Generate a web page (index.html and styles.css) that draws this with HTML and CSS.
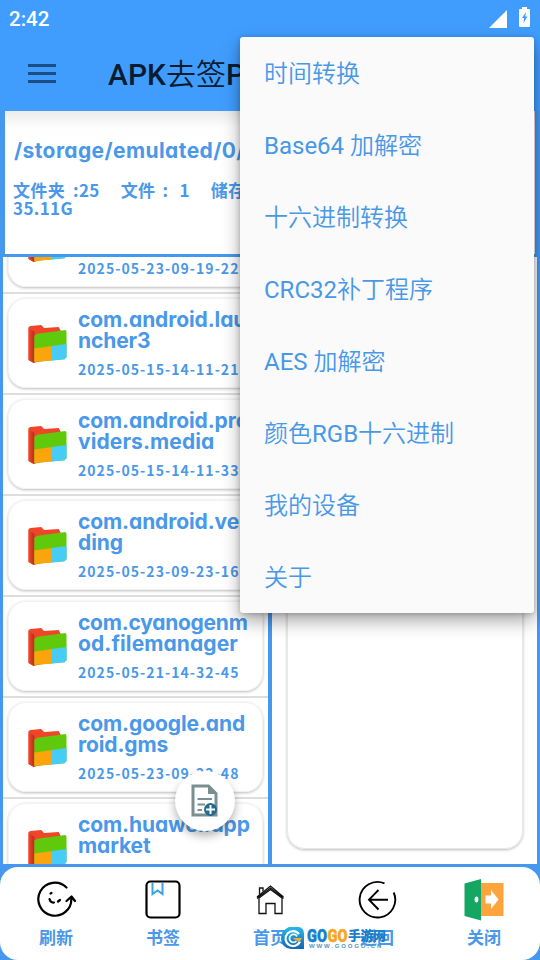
FILE: index.html
```html
<!DOCTYPE html>
<html lang="zh-CN">
<head>
<meta charset="utf-8">
<title>APK去签</title>
<link rel="stylesheet" href="styles.css">
</head>
<body>
<svg class="defs" width="0" height="0">
  <defs>
    <linearGradient id="red"><stop offset="0" stop-color="#ef4a2b"/><stop offset="1" stop-color="#b92c1b"/></linearGradient>
    <linearGradient id="logo" x2="0" y2="1"><stop offset="0" stop-color="#27b8e8"/><stop offset="1" stop-color="#1266b4"/></linearGradient>
    <symbol id="folder" viewBox="0 0 40 40">
      <path d="M0 2 2 1 13 0 16 3 31 2 33 6V32L5 39 0 36Z" fill="#ef4629"/>
      <path d="M0 3 6 7V39L0 36Z" fill="url(#red)"/>
      <path d="M6 11 9 9 38 5 39 7V32L37 35 6 38Z" fill="#60c90c"/>
      <path d="M6 24 24 21.500V36.500L6 38Z" fill="#fca40b"/>
      <path d="M24 21.500 39 19.500V33L37 35 24 36.500Z" fill="#47ccf7"/>
    </symbol>
  </defs>
</svg>
<div class="screen">
  <header class="top">
    <div class="status">
      <span class="clock">2:42</span>
      <svg class="signal" width="18" height="18" viewBox="0 0 18 18"><path d="M18 0V18H0Z" fill="#fff"/></svg>
      <svg class="battery" width="11" height="20" viewBox="0 0 11 20"><path d="M3 0H8V2H10Q11 2 11 3V19Q11 20 10 20H1Q0 20 0 19V3Q0 2 1 2H3Z" fill="#fff"/><path d="M7 5 3 11H5.200L4.500 16 8.500 9.500H6.200Z" fill="#409cfc"/></svg>
    </div>
    <div class="bar">
      <svg width="28" height="20" viewBox="0 0 28 20"><path d="M0 1.500H28M0 9.500H28M0 17.500H28" stroke="#1b4e87" stroke-width="3"/></svg>
      <h1>APK<span>去签</span>P</h1>
    </div>
  </header>
  <section class="info">
    <div class="path">/storage/emulated/0/</div>
    <div class="stats">文件夹<span class="n">:25</span><span class="g1"></span>文件<span class="colon">:</span>1<span class="g2"></span>储存<br>35.11G</div>
  </section>
  <main class="panes">
    <div class="pane left">
      <div class="row"><div class="card"><svg class="ico"><use href="#folder"/></svg><div class="txt"><b>&nbsp;<br>&nbsp;</b><time>2025-05-23-09-19-22</time></div></div></div>
      <div class="row"><div class="card"><svg class="ico"><use href="#folder"/></svg><div class="txt"><b>com.android.lau<br>ncher3</b><time>2025-05-15-14-11-21</time></div></div></div>
      <div class="row"><div class="card"><svg class="ico"><use href="#folder"/></svg><div class="txt"><b>com.android.pro<br><span class="wide">viders.media</span></b><time>2025-05-15-14-11-33</time></div></div></div>
      <div class="row"><div class="card"><svg class="ico"><use href="#folder"/></svg><div class="txt"><b>com.android.ve<br>ding</b><time>2025-05-23-09-23-16</time></div></div></div>
      <div class="row"><div class="card"><svg class="ico"><use href="#folder"/></svg><div class="txt"><b><span class="tight">com.cyanogenm</span><br><span class="wide">od.filemanager</span></b><time>2025-05-21-14-32-45</time></div></div></div>
      <div class="row"><div class="card"><svg class="ico"><use href="#folder"/></svg><div class="txt"><b>com.google.and<br>roid.gms</b><time>2025-05-23-09-22-48</time></div></div></div>
      <div class="row"><div class="card"><svg class="ico"><use href="#folder"/></svg><div class="txt"><b>com.huawei.app<br>market</b></div></div></div>
    </div>
    <div class="pane right"><div class="sheet"></div></div>
  </main>
  <nav class="tabs">
    <a><svg width="40" height="40" viewBox="0 0 40 40" fill="none" stroke="#000" stroke-width="2.200" stroke-linecap="round" stroke-linejoin="round"><path d="M30.500 7.500A16.500 16.500 0 1 0 35.300 18M30.500 21 35.500 16.500 39 21"/><path d="M14.500 13.500 15.500 13M13.500 19Q14.500 23 18 22.500M22 21.500 24 20"/></svg><span>刷新</span></a>
    <a><svg width="40" height="40" viewBox="0 0 40 40" fill="none"><rect x="3.500" y="1.500" width="33" height="36" rx="4" stroke="#000" stroke-width="2.200"/><path d="M9.500 3V14L14.500 10.500 19.500 14V3" stroke="#3aa3dc" stroke-width="2"/></svg><span>书签</span></a>
    <a><svg width="40" height="40" viewBox="0 0 40 40" fill="none" stroke="#111" stroke-width="1.300"><path d="M7 17 20.500 6 33.500 17M7 18.500 20.500 8 33.500 18.500"/><path d="M9 18V33.500H16V23.500H25V33.500H32V18L20.500 9.500Z"/><path d="M9.500 14.500V8H13V11.500"/></svg><span>首页</span></a>
    <a><svg width="40" height="40" viewBox="0 0 40 40" fill="none" stroke="#000" stroke-width="1.900"><path d="M27.500 3.400A17.800 17.800 0 1 0 36.700 12.500M31 19.700H12M21.500 10 12 19.700 21.500 29.500"/></svg><span>返回</span></a>
    <a><svg width="40" height="42" viewBox="0 0 40 42"><path d="M17 4H39.500V37H17Z" fill="#fda43e"/><path d="M.5 4.500 17 0V41.500L.5 37Z" fill="#13a763"/><ellipse cx="12.500" cy="20.500" rx="1.900" ry="3" fill="#fff"/><path d="M21.500 16.500H27V11L34.500 20.500 27 30V24.500H21.500Z" fill="#fff"/></svg><span>关闭</span></a>
  </nav>
  <div class="fab"><svg width="28" height="34" viewBox="0 0 28 34"><path d="M2 2H17.500L25 9.500V31H2Z" fill="#fff" stroke="#7a8f90" stroke-width="3"/><path d="M17 1.500 25.500 10H17Z" fill="#7a8f90"/><path d="M6.500 15H21M6.500 20.500H14M6.500 26H11" stroke="#7a8f90" stroke-width="2"/><circle cx="19.500" cy="25.500" r="6.500" fill="#236a91"/><path d="M19.500 21V30M15 25.500H24" stroke="#fff" stroke-width="2"/></svg></div>
  <div class="brand">
    <svg width="24" height="24" viewBox="0 0 24 24"><path d="M8 1H18Q23 2 23 8V23H10Q1 22 0 13 0 4 8 1Z" fill="url(#logo)"/><path d="M18 8A7.500 7.500 0 1 0 19 15.500" fill="none" stroke="#fff" stroke-width="2.200"/><path d="M16 10.500A4 4 0 1 0 15.500 15" fill="none" stroke="#e8f8ff" stroke-width="1.800"/><path d="M11 12H21L18.500 16Z" fill="#f7a832"/></svg>
    <div class="words"><div class="name"><svg class="gogo" width="41" height="17"><text class="go blue" x="0" y="15.500" textLength="20" lengthAdjust="spacingAndGlyphs">GO</text><text class="go gold" x="20.500" y="15.500" textLength="20" lengthAdjust="spacingAndGlyphs">GO</text></svg><i>手游网</i></div><small>WWW.GOOGO.CN</small></div>
  </div>
  <div class="menu">
    <div>时间转换</div>
    <div><em>Base64</em> 加解密</div>
    <div>十六进制转换</div>
    <div><em>CRC32</em>补丁程序</div>
    <div><em>AES</em> 加解密</div>
    <div>颜色<em>RGB</em>十六进制</div>
    <div>我的设备</div>
    <div>关于</div>
  </div>
</div>
</body>
</html>
```
FILE: styles.css
```css
* { box-sizing: border-box; }
body { margin: 0; background: #4795e9; }
.defs { position: absolute; }
.screen { position: relative; display: flex; flex-direction: column; width: 540px; height: 960px; overflow: hidden; background: #4698ee; font-family: Inter, "Noto Sans CJK SC", sans-serif; color: #4a98e9; }
.top { height: 111px; background: #409dfe; flex: none; }
.status { display: flex; align-items: center; height: 37px; padding: 0 10px 0 9px; color: #fff; }
.clock { flex: 1; font: 500 20.500px/37px Roboto, sans-serif; padding-top: 2px; }
.signal { margin-right: 12px; }
.battery { margin-top: -3px; }
.bar { display: flex; align-items: center; height: 74px; padding-left: 28px; }
.bar h1 { margin: 2px 0 0 52px; font: 500 30px/74px Roboto, "Noto Sans CJK SC", sans-serif; color: #0b1c30; white-space: nowrap; }
.bar h1 span { font-weight: 350; }
.info { flex: none; height: 143px; margin: 0 5px; padding: 27px 0 0 9px; background: linear-gradient(#ebebeb, #fdfdfd 16px, #fff 30px); white-space: nowrap; font-weight: 700; }
.path { font-size: 21px; line-height: 26px; letter-spacing: .4px; font-weight: 700; font-feature-settings: "cv11"; }
.stats { margin: 17px 0 0 -1px; font: 700 17px/18px "Noto Sans CJK SC", sans-serif; letter-spacing: .35px; }
.n { padding-left: 8px; }
.g1 { display: inline-block; width: 21px; }
.g2 { display: inline-block; width: 21px; }
.colon { display: inline-block; width: 24px; padding-left: 7px; }
.panes { display: flex; gap: 4px; flex: none; height: 607px; margin: 3px 3px 0; }
.pane { background: #fff; overflow: hidden; }
.left { width: 265px; }
.right { width: 265px; padding: 0 14px 15px 15px; }
.sheet { height: 100%; border: 1px solid #e4e8ea; border-radius: 0 0 18px 18px; box-shadow: 0 1px 3px #bbb; }
.row { height: 101px; padding: 4px 5px 0; border-bottom: 2px solid #ddd; }
.row:first-child { margin-top: -64px; }
.card { display: flex; height: 90px; border: 1px solid #f2f2f2; border-radius: 18px; box-shadow: 0 1px 3px #bbb; padding: 10px 0 0 19px; }
.ico { width: 40px; height: 39px; margin-top: 16px; flex: none; }
.txt { margin-left: 10px; white-space: nowrap; }
.txt b { display: block; font-size: 21px; line-height: 21px; font-weight: 700; letter-spacing: -.1px; font-feature-settings: "cv11"; }
.txt .tight { letter-spacing: -.25px; }
.txt .wide { letter-spacing: .1px; }
.txt time { display: block; margin-top: 8px; font: 700 14px/20px "Noto Sans CJK SC", sans-serif; letter-spacing: 1.050px; }
.tabs { display: flex; flex: none; height: 93px; margin-top: 3px; padding: 12px 2.500px 0; background: #fff; border-radius: 18px; }
.tabs a { flex: 1; display: flex; flex-direction: column; align-items: center; }
.tabs svg { height: 42px; flex: none; }
.tabs span { font: 700 17px/24px "Noto Sans CJK SC", sans-serif; margin-top: 4px; }
.fab { position: absolute; left: 175px; top: 771px; width: 60px; height: 60px; border-radius: 50%; background: #fff; box-shadow: 0 5px 10px rgba(0,0,0,.3); display: flex; align-items: center; justify-content: center; }
.brand { position: absolute; left: 281px; top: 926px; display: flex; gap: 2px; }
.name { display: flex; height: 17px; }
.gogo { overflow: visible; }
.go { font: 900 19px Roboto, sans-serif; stroke-width: .5px; }
.blue { fill: #1681c9; stroke: #1681c9; }
.gold { fill: #f8a526; stroke: #f8a526; }
.name i { font: 900 13px/18px "Noto Sans CJK SC", sans-serif; letter-spacing: -.5px; color: #197fc8; white-space: nowrap; }
.brand small { display: block; font: 700 6px/7px "Liberation Sans", sans-serif; letter-spacing: 1.850px; color: #5297bd; padding-left: 2px; white-space: nowrap; }
.menu { position: absolute; left: 240px; top: 37px; width: 294px; height: 576px; padding-top: 1px; background: #fafafa; border-radius: 3px; box-shadow: 0 8px 18px rgba(0,0,0,.35), 0 1px 5px rgba(0,0,0,.2); }
.menu div { height: 72px; padding-left: 24px; font: 350 24px/72px Roboto, "Noto Sans CJK SC", sans-serif; color: #4898e7; white-space: pre; }
.menu em { font-style: normal; font-weight: 400; }
```
